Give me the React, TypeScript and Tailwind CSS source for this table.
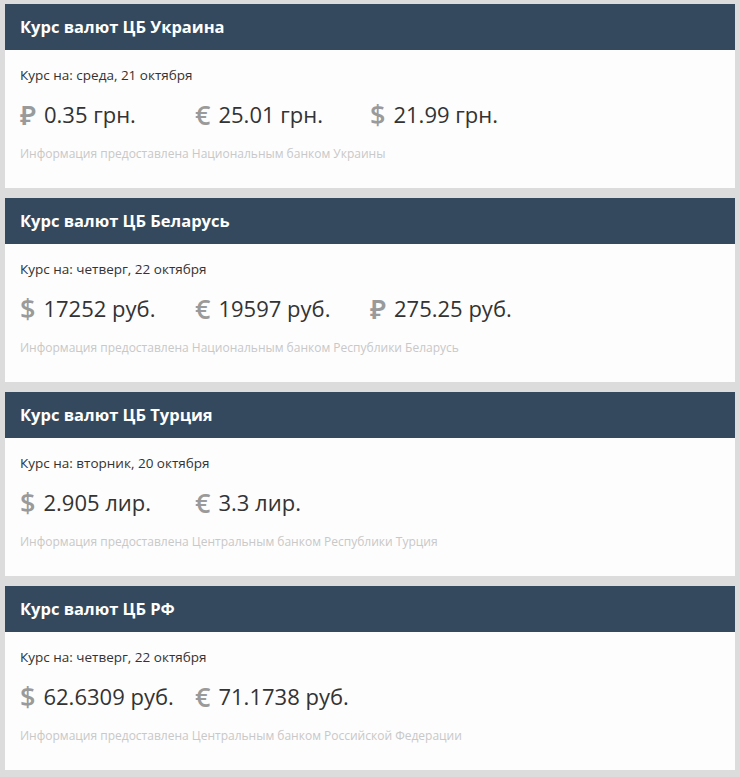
import React from "react";

type Rate = { sign: string; value: string };

type Bank = {
  title: string;
  date: string;
  rates: Rate[];
  source: string;
};

const banks: Bank[] = [
  {
    title: "Курс валют ЦБ Украина",
    date: "Курс на: среда, 21 октября",
    rates: [
      { sign: "₽", value: "0.35 грн." },
      { sign: "€", value: "25.01 грн." },
      { sign: "$", value: "21.99 грн." },
    ],
    source: "Информация предоставлена Национальным банком Украины",
  },
  {
    title: "Курс валют ЦБ Беларусь",
    date: "Курс на: четверг, 22 октября",
    rates: [
      { sign: "$", value: "17252 руб." },
      { sign: "€", value: "19597 руб." },
      { sign: "₽", value: "275.25 руб." },
    ],
    source: "Информация предоставлена Национальным банком Республики Беларусь",
  },
  {
    title: "Курс валют ЦБ Турция",
    date: "Курс на: вторник, 20 октября",
    rates: [
      { sign: "$", value: "2.905 лир." },
      { sign: "€", value: "3.3 лир." },
    ],
    source: "Информация предоставлена Центральным банком Республики Турция",
  },
  {
    title: "Курс валют ЦБ РФ",
    date: "Курс на: четверг, 22 октября",
    rates: [
      { sign: "$", value: "62.6309 руб." },
      { sign: "€", value: "71.1738 руб." },
    ],
    source: "Информация предоставлена Центральным банком Российской Федерации",
  },
];

const RateCard: React.FC<{ bank: Bank }> = ({ bank }) => {
  return (
    <div className="bg-[#fdfdfd]">
      <div className="h-[46px] bg-[#34495e] px-[15px] flex items-center">
        <h2 className="text-[16.5px] font-bold text-white">{bank.title}</h2>
      </div>
      <div className="px-[15px] pt-[16px] pb-[26px]">
        <div className="text-[13.5px] text-[#333] leading-[18px]">{bank.date}</div>
        <div className="flex mt-[12px] h-[36px] items-center">
          {bank.rates.map((r) => (
            <div key={r.sign} className="w-[175px] flex items-center">
              <span className="text-[27px] font-semibold text-[#9a9a9a] leading-none mr-[8px]">{r.sign}</span>
              <span className="text-[22px] text-[#333] leading-none">{r.value}</span>
            </div>
          ))}
        </div>
        <div className="mt-[14px] text-[12px] text-[#c8c8c8] leading-[16px]">{bank.source}</div>
      </div>
    </div>
  );
};

export default function App() {
  return (
    <div
      className="min-h-[777px] w-[740px] bg-[#dcdcdc] pt-[4px] px-[5px] flex flex-col gap-[10px]"
      style={{ fontFamily: '"Open Sans", "Noto Sans", sans-serif' }}
    >
      {banks.map((b) => (
        <RateCard key={b.title} bank={b} />
      ))}
    </div>
  );
}
